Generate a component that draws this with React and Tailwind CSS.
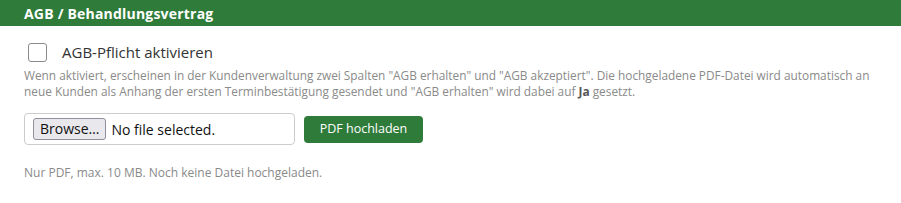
import React, { useState } from 'react';

const App = () => {
  const [active, setActive] = useState(false);

  return (
    <div className='w-[901px] h-[203px] bg-white font-["Open_Sans",sans-serif] text-[#333]'>
      <div className='h-[26px] bg-[#2e7b3a] px-6 flex items-center'>
        <h2 className='text-white font-bold text-[14px] tracking-[0.2px]'>AGB / Behandlungsvertrag</h2>
      </div>

      <div className='px-6'>
        <label className='flex items-center mt-[17px] h-[19px] cursor-pointer'>
          <input
            type='checkbox'
            checked={active}
            onChange={(e) => setActive(e.target.checked)}
            className='appearance-none w-[19px] h-[19px] ml-1 border border-[#8a8a8a] rounded-[3px] bg-white'
          />
          <span className='ml-[15px] text-[15px] text-[#333]'>AGB-Pflicht aktivieren</span>
        </label>

        <p className='mt-[5px] text-[11.85px] leading-[16px] text-[#8a8a8a]'>
          Wenn aktiviert, erscheinen in der Kundenverwaltung zwei Spalten "AGB erhalten" und "AGB akzeptiert". Die hochgeladene PDF-Datei wird automatisch an neue Kunden als Anhang der ersten Terminbestätigung gesendet und "AGB erhalten" wird dabei auf <strong className='font-bold text-[#555]'>Ja</strong> gesetzt.
        </p>

        <div className='flex items-center mt-[14px] gap-[9px]'>
          <div className='w-[271px] h-[32px] border border-[#ccc] rounded-[4px] flex items-center px-2'>
            <button className='h-[22px] px-[6px] bg-[#e9e9ed] border border-[#8f8f9d] rounded-[3px] text-[14px] text-[#111] leading-none'>Browse…</button>
            <span className='ml-[5px] text-[14px] text-[#111]'>No file selected.</span>
          </div>
          <button className='h-[27px] w-[119px] bg-[#2e7b3a] text-white text-[12.5px] rounded-[4px]'>PDF hochladen</button>
        </div>

        <p className='mt-[19px] text-[12px] text-[#8a8a8a]'>Nur PDF, max. 10 MB. Noch keine Datei hochgeladen.</p>
      </div>
    </div>
  );
};

export default App;
